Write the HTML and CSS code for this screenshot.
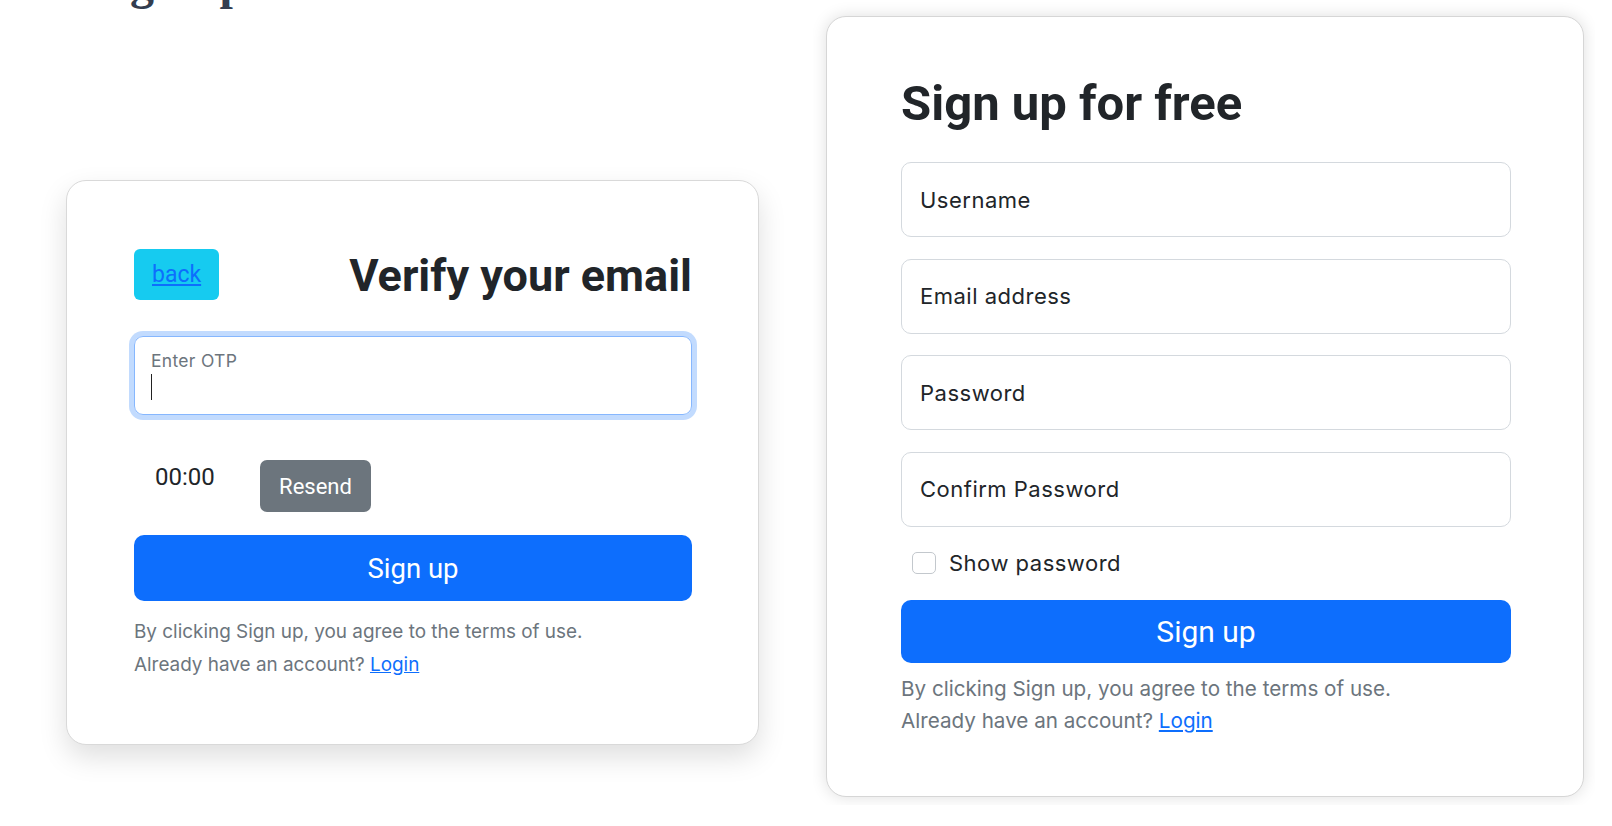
FILE: index.html
```html
<!DOCTYPE html>
<html lang="en">
<head>
<meta charset="utf-8">
<title>Sign up</title>
<link rel="stylesheet" href="styles.css">
</head>
<body>
<div class="page">
  <section class="left-col">
    <h1 class="page-title">Sign up</h1>
    <div class="card verify-card">
      <div class="verify-header">
        <div class="back-btn"><a href="#" class="link">back</a></div>
        <h2 class="verify-title">Verify your email</h2>
      </div>
      <div class="otp-field">
        <span class="otp-label">Enter OTP</span>
        <span class="caret"></span>
      </div>
      <div class="timer-row">
        <span class="timer">00:00</span>
        <button class="btn btn-secondary" type="button">Resend</button>
      </div>
      <button class="btn btn-primary btn-verify" type="button">Sign up</button>
      <div class="notes notes-left">
        <p>By clicking Sign up, you agree to the terms of use.</p>
        <p>Already have an account? <a href="#" class="link">Login</a></p>
      </div>
    </div>
  </section>
  <section class="shot">
    <div class="card signup-card">
      <h2 class="signup-title">Sign up for free</h2>
      <div class="fields">
        <input class="field" type="text" placeholder="Username">
        <input class="field" type="text" placeholder="Email address">
        <input class="field" type="text" placeholder="Password">
        <input class="field" type="text" placeholder="Confirm Password">
      </div>
      <label class="check-row"><input type="checkbox" class="check"><span>Show password</span></label>
      <button class="btn btn-primary btn-signup" type="button">Sign up</button>
      <div class="notes notes-right">
        <p>By clicking Sign up, you agree to the terms of use.</p>
        <p>Already have an account? <a href="#" class="link">Login</a></p>
      </div>
    </div>
  </section>
</div>
</body>
</html>
```

FILE: styles.css
```css
* { box-sizing: border-box; }
html, body { margin: 0; padding: 0; background: #fff; }
body {
  width: 1612px;
  height: 826px;
  overflow: hidden;
  font-family: Inter, "Noto Sans", sans-serif;
  color: #212529;
}
.page { display: flex; align-items: flex-start; }

.left-col { width: 813px; padding-left: 66px; flex: none; }
.page-title {
  font-family: "Liberation Serif", serif;
  font-weight: 700;
  font-size: 48px;
  line-height: 48px;
  color: #333d4f;
  margin: -41px 0 0 24px;
}
.card { background: #fff; }
.verify-card {
  width: 693px;
  height: 565px;
  margin-top: 173px;
  border: 1px solid #d9d9d9;
  border-radius: 20px;
  box-shadow: 0 12px 28px rgba(0, 0, 0, 0.13);
  padding: 67px 66px 0 67px;
}
.verify-header { display: flex; justify-content: space-between; align-items: center; }
.back-btn {
  width: 85px;
  height: 51px;
  background: #16cbf0;
  border-radius: 6px;
  display: flex;
  align-items: center;
  padding-left: 18px;
}
.back-btn .link { font-family: Roboto, sans-serif; font-size: 23px; }
.link { color: #0d6efd; text-decoration: underline; }
.verify-title {
  margin: 0;
  font-family: Roboto, sans-serif;
  font-weight: 700;
  font-size: 45px;
  line-height: 51px;
  color: #212529;
  padding-top: 2px;
}
.otp-field {
  margin-top: 35px;
  height: 79px;
  border: 1px solid #86b7fe;
  border-radius: 9px;
  box-shadow: 0 0 0 5px rgba(13, 110, 253, 0.25);
  padding: 14px 16px 0;
  display: flex;
  flex-direction: column;
  align-items: flex-start;
}
.otp-label { font-size: 17.5px; line-height: 20px; color: #6c757d; letter-spacing: 0.3px; }
.caret { width: 1px; height: 26px; background: #222; margin-top: 3px; }

.timer-row { margin-top: 45px; display: flex; align-items: flex-start; }
.timer { width: 126px; padding: 3px 0 0 21px; font-family: Roboto, sans-serif; font-size: 24px; color: #212529; }

.btn {
  border: 0;
  font-family: Roboto, sans-serif;
  color: #fff;
  display: flex;
  align-items: center;
  justify-content: center;
  padding: 0;
  cursor: pointer;
}
.btn-secondary { width: 111px; height: 52px; background: #6c757d; border-radius: 7px; font-size: 22px; }
.btn-primary { background: #0d6efd; width: 100%; }
.btn-verify { margin-top: 23px; height: 66px; border-radius: 10px; font-size: 27.5px; }

.notes p { margin: 0; color: #6c757d; }
.notes-left { margin-top: 14px; font-size: 18.9px; line-height: 33px; }

.shot {
  width: 782px;
  height: 805px;
  overflow: hidden;
  padding: 16px 0 0 13px;
  background: #fff;
  flex: none;
}
.signup-card {
  width: 758px;
  height: 781px;
  border: 1px solid #d6d6d6;
  border-radius: 20px;
  box-shadow: 0 0 16px rgba(0, 0, 0, 0.13);
  padding: 63px 72px 0 74px;
}
.signup-title {
  margin: 0;
  font-family: Roboto, sans-serif;
  font-weight: 700;
  font-size: 49px;
  line-height: 48px;
  color: #212529;
}
.fields { margin-top: 34px; display: flex; flex-direction: column; gap: 21.5px; }
.field {
  width: 100%;
  height: 75px;
  border: 1px solid #d4d9de;
  border-radius: 10px;
  padding: 0 18px;
  font-family: Inter, sans-serif;
  font-size: 22px;
  letter-spacing: 0.5px;
  color: #212529;
  outline: none;
  background: #fff;
}
.field::placeholder { color: #212529; opacity: 1; }
.check-row {
  margin-top: 24.5px;
  display: flex;
  align-items: center;
  gap: 13px;
  padding-left: 11px;
  height: 24px;
  font-size: 22px;
  letter-spacing: 0.5px;
  color: #212529;
}
.check {
  appearance: none;
  -webkit-appearance: none;
  width: 24px;
  height: 22px;
  border: 1px solid #c3c8cd;
  border-radius: 5px;
  margin: 0;
  background: #fff;
}
.btn-signup { margin-top: 24.5px; height: 63px; border-radius: 10px; font-size: 30px; }
.notes-right { margin-top: 10.7px; font-size: 20.65px; line-height: 32px; }
```
